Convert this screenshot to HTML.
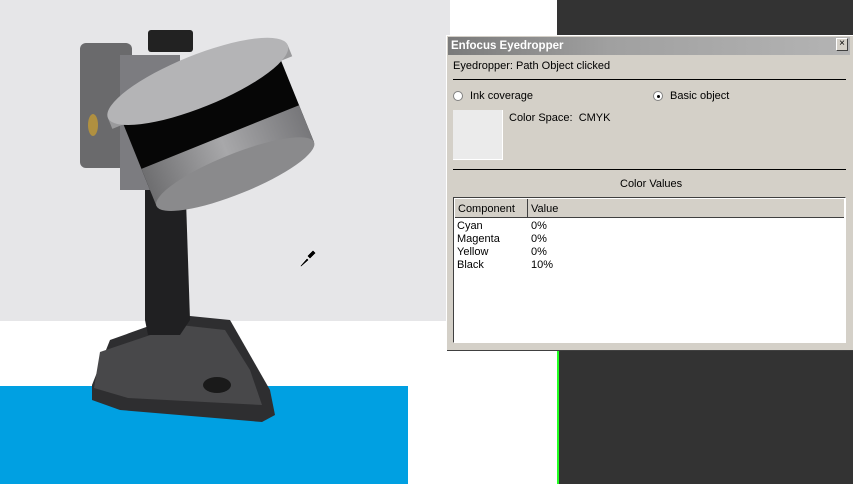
<!DOCTYPE html>
<html><head><style>
body{margin:0;width:853px;height:484px;position:relative;overflow:hidden;background:#fff;font-family:"Liberation Sans",sans-serif;font-size:11px;color:#000}
.a{position:absolute}
.t{position:absolute;white-space:nowrap;line-height:13px}
</style></head><body>
<div class="a" style="left:0;top:0;width:450px;height:321px;background:#e6e6e8"></div>
<div class="a" style="left:0;top:386px;width:408px;height:98px;background:#00a0e2"></div>
<div class="a" style="left:557px;top:0;width:296px;height:484px;background:#333"></div>
<div class="a" style="left:557px;top:349px;width:2px;height:135px;background:#2f2"></div>
<svg class="a" style="left:0;top:0" width="450" height="484">
<defs>
<linearGradient id="g1" x1="0" x2="1"><stop offset="0" stop-color="#6e6e70"/><stop offset=".5" stop-color="#a8a8aa"/><stop offset="1" stop-color="#77777a"/></linearGradient>
<linearGradient id="g2" x1="0" x2="1" y1="0" y2="1"><stop offset="0" stop-color="#c8c8ca"/><stop offset="1" stop-color="#8e8e90"/></linearGradient>
</defs>
<path d="M92 385 L110 340 L180 315 L230 320 L270 390 L275 415 L262 422 L120 410 L92 400Z" fill="#2e2e30"/>
<path d="M100 352 L180 325 L225 330 L250 370 L262 405 L128 398 L94 388Z" fill="#48484a"/>
<ellipse cx="217" cy="385" rx="14" ry="8" fill="#1a1a1a"/>
<path d="M145 175 L185 170 L190 320 L180 335 L148 335 L145 320Z" fill="#202022"/>
<rect x="80" y="43" width="52" height="125" rx="6" fill="#6a6a6c"/>
<rect x="120" y="55" width="60" height="135" fill="#7c7c80"/>
<rect x="148" y="30" width="45" height="22" rx="3" fill="#222"/>
<ellipse cx="93" cy="125" rx="5" ry="11" fill="#b09040"/>
<g transform="rotate(-22 210 125)">
<rect x="130" y="85" width="170" height="95" fill="#060606"/>
<path d="M130 140 L300 140 L300 180 L130 180Z" fill="url(#g1)"/>
<ellipse cx="215" cy="180" rx="85" ry="20" fill="#8a8a8c"/>
<rect x="118" y="80" width="194" height="12" fill="#9a9a9c"/>
<ellipse cx="215" cy="80" rx="97" ry="26" fill="#b4b4b6"/>
</g>
<path d="M307 256 l6 -6 l3 3 l-6 6z M300 266 l7 -8 l2 2 l-8 7z" fill="#000" stroke="#fff" stroke-width=".6"/>
</svg>
<div class="a" style="left:446px;top:35px;width:406px;height:314px;background:#d4d0c8;border-top:1px solid #fff;border-left:1px solid #fff;box-shadow:1px 1px 0 #404040"></div>
<div class="a" style="left:448px;top:37px;width:402px;height:18px;background:linear-gradient(90deg,#7a7a7a,#a0a0a0 40%,#b4b4b4)"></div>
<div class="t" style="left:451px;top:40px;color:#fff;font-weight:bold;font-size:11.5px">Enfocus Eyedropper</div>
<div class="a" style="left:836px;top:38px;width:12px;height:13px;background:#d4d0c8;border:1px solid #fff;border-right-color:#404040;border-bottom-color:#404040;box-sizing:border-box;font-size:10px;line-height:10px;text-align:center">×</div>
<div class="t" style="left:453px;top:60px">Eyedropper: Path Object clicked</div>
<div class="a" style="left:453px;top:79px;width:393px;height:1px;background:#000"></div>
<div class="a" style="left:453px;top:91px;width:10px;height:10px;border-radius:50%;background:#fff;border:1px solid #808080;box-sizing:border-box"></div>
<div class="t" style="left:470px;top:90px">Ink coverage</div>
<div class="a" style="left:653px;top:91px;width:10px;height:10px;border-radius:50%;background:#fff;border:1px solid #808080;box-sizing:border-box"></div>
<div class="a" style="left:657px;top:95px;width:3px;height:3px;border-radius:50%;background:#000"></div>
<div class="t" style="left:670px;top:90px">Basic object</div>
<div class="a" style="left:453px;top:110px;width:50px;height:50px;background:#ebebeb;border-right:1px solid #fff;border-bottom:1px solid #fff;box-sizing:border-box"></div>
<div class="t" style="left:509px;top:112px">Color Space:&nbsp; CMYK</div>
<div class="a" style="left:453px;top:169px;width:393px;height:1px;background:#000"></div>
<div class="t" style="left:620px;top:178px">Color Values</div>
<div class="a" style="left:453px;top:197px;width:393px;height:146px;background:#fff;border:1px solid #404040;border-right-color:#fff;border-bottom-color:#fff;box-sizing:border-box"></div>
<div class="a" style="left:455px;top:199px;width:389px;height:19px;background:#d4d0c8;border-bottom:1px solid #404040;box-sizing:border-box"></div>
<div class="a" style="left:527px;top:199px;width:1px;height:18px;background:#404040"></div>
<div class="t" style="left:458px;top:203px">Component</div>
<div class="t" style="left:531px;top:203px">Value</div>
<div class="t" style="left:457px;top:220px">Cyan</div><div class="t" style="left:531px;top:220px">0%</div>
<div class="t" style="left:457px;top:233px">Magenta</div><div class="t" style="left:531px;top:233px">0%</div>
<div class="t" style="left:457px;top:246px">Yellow</div><div class="t" style="left:531px;top:246px">0%</div>
<div class="t" style="left:457px;top:259px">Black</div><div class="t" style="left:531px;top:259px">10%</div>
</body></html>
